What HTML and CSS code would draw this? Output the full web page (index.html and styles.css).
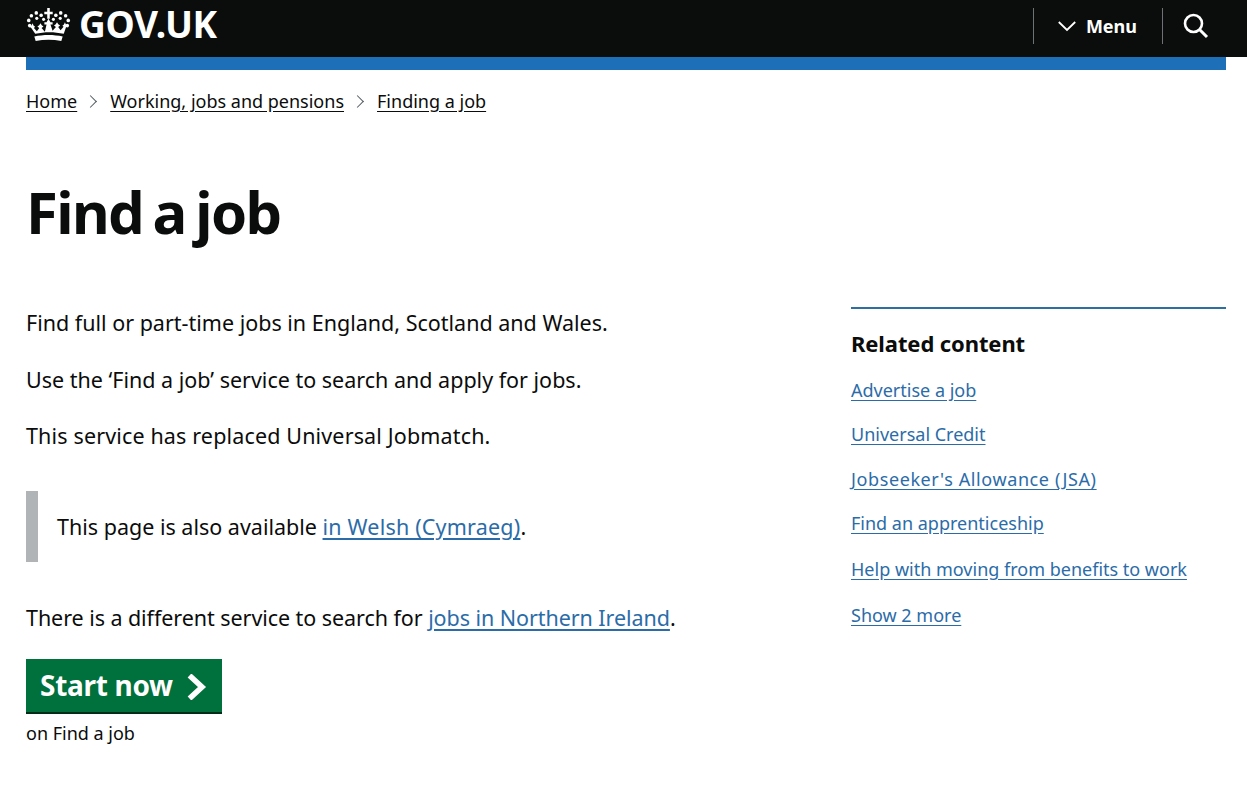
FILE: index.html
```html
<!DOCTYPE html>
<html lang="en">
<head>
<meta charset="utf-8">
<title>Find a job - GOV.UK</title>
<link rel="stylesheet" href="styles.css">
</head>
<body>
<header class="masthead">
  <a class="logo" href="#">
    <svg class="crown" viewBox="0 0 46 34" width="45" height="35" preserveAspectRatio="none" aria-hidden="true">
      <g fill="#fff">
        <path d="M21.700 1h2.600v3.500h3v2.600h-3v4.400h-2.600V7.100h-3V4.500h3z"/>
        <circle cx="15.500" cy="8" r="1.800"/><circle cx="30.500" cy="8" r="1.800"/>
        <circle cx="10.500" cy="5.800" r="1.800"/><circle cx="35.500" cy="5.800" r="1.800"/>
        <circle cx="5.500" cy="8.500" r="1.800"/><circle cx="40.500" cy="8.500" r="1.800"/>
        <circle cx="2.800" cy="13" r="1.800"/><circle cx="43.200" cy="13" r="1.800"/>
        <circle cx="3.800" cy="18" r="1.800"/><circle cx="42.200" cy="18" r="1.800"/>
        <circle cx="11" cy="11" r="1.600"/><circle cx="35" cy="11" r="1.600"/>
        <circle cx="18" cy="12" r="1.600"/><circle cx="28" cy="12" r="1.600"/>
        <path d="M23 11.500l2 3.200h2.200v2.200H25l2.200 6.100 3.400-3.600-2-1.500 1.800-1.200 1.300-2 1.300 2 1.900 1.200-2 1.500 2.500 3.200 3-3.300-1.200-1 1.600-1.300 1-2.200 1 2.200 1.800 1.300-1.700 1.400-2.300 6.400c-5-1.100-9.600-1.600-14.600-1.600s-9.600.5-14.600 1.600L5.600 20.700l-1.700-1.400 1.800-1.300 1-2.200 1 2.200 1.600 1.300-1.200 1 3 3.300 2.500-3.200-2-1.500 1.900-1.200 1.300-2 1.300 2 1.800 1.200-2 1.500 3.400 3.600L21 16.900h-2.200v-2.200H21z"/>
        <path d="M8.500 28.700c4.500-1 9.500-1.500 14.500-1.500s10 .5 14.500 1.500l-1.400 4.300c-4.300-.8-8.700-1.200-13.100-1.200s-8.800.4-13.100 1.200z"/>
      </g>
    </svg>
    <span class="wordmark">GOV.UK</span>
  </a>
  <nav class="tools">
    <a class="menu" href="#">
      <svg class="chev-down" viewBox="0 0 18 12" width="18" height="12" aria-hidden="true"><path d="M.8 2l8.200 8 8.200-8" fill="none" stroke="#fff" stroke-width="1.800"/></svg>
      <span>Menu</span>
    </a>
    <a class="search" href="#" aria-label="Search">
      <svg viewBox="0 0 27 27" width="27" height="27" aria-hidden="true"><circle cx="11.500" cy="11.500" r="8.500" fill="none" stroke="#fff" stroke-width="2.600"/><path d="M17.500 17.500l7.500 7.500" stroke="#fff" stroke-width="3" fill="none"/></svg>
    </a>
  </nav>
</header>
<div class="page">
  <div class="blue-bar"></div>
  <ol class="crumbs">
    <li><a href="#">Home</a></li>
    <li><a href="#">Working, jobs and pensions</a></li>
    <li><a href="#">Finding a job</a></li>
  </ol>
  <h1 class="title">Find a job</h1>
  <div class="columns">
    <main class="content">
      <p>Find full or part-time jobs in England, Scotland and Wales.</p>
      <p>Use the ‘Find a job’ service to search and apply for jobs.</p>
      <p class="last">This service has replaced Universal Jobmatch.</p>
      <div class="inset">This page is also available <a class="welsh" href="#">in Welsh (Cymraeg)</a>.</div>
      <p class="ni">There is a different service to search for <a href="#">jobs in Northern Ireland</a>.</p>
      <a class="start" href="#"><span class="start-label">Start now</span>
        <svg viewBox="0 0 22 26" width="22" height="26" aria-hidden="true"><path d="M3.500 1.500L16 13 3.500 24.500" fill="none" stroke="#fff" stroke-width="5.500"/></svg>
      </a>
      <p class="on">on Find a job</p>
    </main>
    <aside class="related">
      <h2>Related content</h2>
      <ul>
        <li><a href="#">Advertise a job</a></li>
        <li><a href="#">Universal Credit</a></li>
        <li><a class="wide" href="#">Jobseeker's Allowance (JSA)</a></li>
        <li class="tall"><a href="#">Find an apprenticeship</a></li>
        <li class="tall"><a href="#">Help with moving from benefits to work</a></li>
        <li><a href="#">Show 2 more</a></li>
      </ul>
    </aside>
  </div>
</div>
</body>
</html>
```
FILE: styles.css
```css
* { box-sizing: border-box; }
html, body { margin: 0; padding: 0; }
body { background: #fff; color: #0b0c0c; font-family: "Noto Sans", "Liberation Sans", sans-serif; height: 793px; overflow: hidden; }
a { color: inherit; }
.masthead { background: #0b0c0c; height: 57px; display: flex; justify-content: space-between; align-items: center; padding: 0 38px 0 26px; color: #fff; }
.logo { display: flex; align-items: center; gap: 8px; color: #fff; text-decoration: none; }
.crown { display: block; margin-top: -8px; }
.wordmark { font-weight: 700; font-size: 37px; line-height: 50px; letter-spacing: -0.4px; margin-top: -9px; }
.tools { display: flex; align-items: center; height: 36px; margin-top: -6px; }
.menu { display: flex; align-items: center; gap: 10px; height: 36px; padding: 0 25px 0 24px; border-left: 1px solid #6f7274; border-right: 1px solid #6f7274; color: #fff; text-decoration: none; font-weight: 700; font-size: 18px; }
.search { display: block; height: 27px; padding-left: 19px; }
.page { padding: 0 21px 0 26px; }
.blue-bar { height: 13px; background: #1d70b8; }
.crumbs { list-style: none; display: flex; margin: 19px 0 0; padding: 0; font-size: 18px; line-height: 25px; }
.crumbs li { display: flex; align-items: center; }
.crumbs li + li::before { content: ""; width: 8px; height: 8px; border-top: 1px solid #505a5f; border-right: 1px solid #505a5f; transform: rotate(45deg); margin: 0 15px 0 9px; }
.crumbs a { text-underline-offset: 3px; }
.title { margin: 62px 0 0; font-size: 58px; line-height: 72px; font-weight: 700; letter-spacing: -1.600px; word-spacing: -4px; }
.columns { display: flex; justify-content: space-between; margin-top: 60px; }
.content { width: 760px; font-size: 21.500px; line-height: 30px; }
.content p { margin: 0 0 26.500px; }
.content p.last { margin-bottom: 40px; letter-spacing: 0.15px; }
.content a { color: #2b6ca8; text-underline-offset: 3px; }
.inset { border-left: 12px solid #b1b4b6; padding: 21px 0 20px 19px; margin: 0 0 41px; }
.content a.welsh { letter-spacing: 0.2px; }
.content p.ni { margin-bottom: 26px; letter-spacing: -0.06px; }
.content a.start { display: inline-flex; align-items: center; justify-content: space-between; width: 196px; height: 55px; padding: 0 14px; background: #00703c; box-shadow: inset 0 -2px 0 #002d18; color: #fff; font-weight: 700; font-size: 28px; letter-spacing: -0.3px; white-space: nowrap; text-decoration: none; }
.start-label { margin-top: -4px; }
.content p.on { margin: 7px 0 0; font-size: 18px; line-height: 25px; }
.related { width: 375px; border-top: 2px solid #2f6f9f; padding-top: 17px; margin-top: -1px; }
.related h2 { margin: 0 0 17px; font-size: 22px; line-height: 35px; font-weight: 700; letter-spacing: -0.1px; }
.related ul { list-style: none; margin: 0; padding: 0; font-size: 18px; line-height: 25px; }
.related li { margin-bottom: 19.300px; }
.related li.tall { margin-bottom: 21px; }
.related a { color: #2b6ca8; text-underline-offset: 3px; }
.related a.wide { letter-spacing: 0.6px; }
```
